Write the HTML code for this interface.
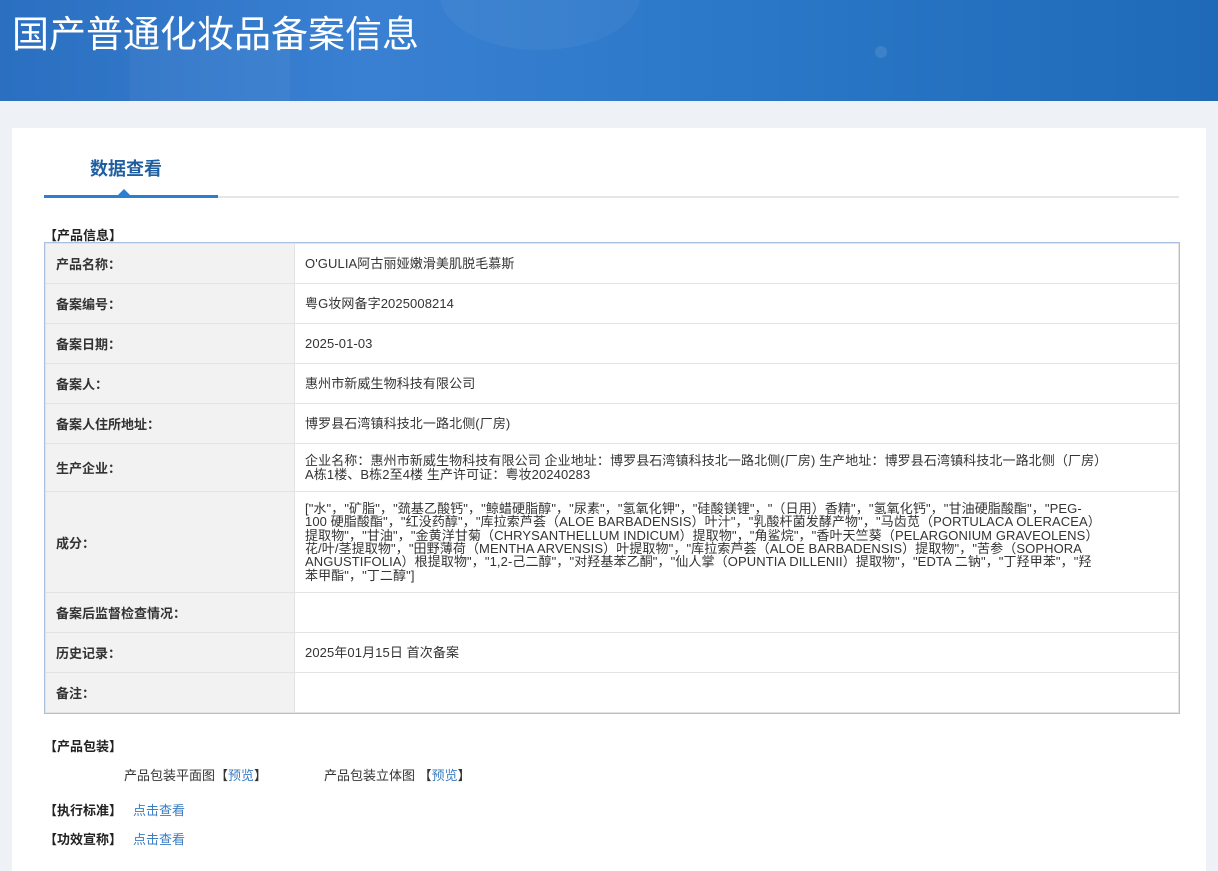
<!DOCTYPE html>
<html><head><meta charset="utf-8"><style>
*{margin:0;padding:0;box-sizing:border-box}
body{width:1218px;height:871px;overflow:hidden;background:#eef2f6;font-family:"Liberation Sans","Noto Sans CJK SC",sans-serif;font-size:13px;color:#333;position:relative}
.hd{position:absolute;left:0;top:0;width:1218px;height:101px;background:linear-gradient(90deg,#2a6fc0 0%,#3a80d2 30%,#2b78c8 60%,#1f6ab8 100%);overflow:hidden}
.hd h1{position:absolute;left:12px;top:4px;font-size:37px;font-weight:normal;color:#fff;font-family:"Noto Sans CJK SC",sans-serif}
.card{position:absolute;left:12px;top:128px;width:1194px;height:743px;background:#fff}
.abs{position:absolute;white-space:nowrap}
table{position:absolute;left:45px;top:243px;width:1134px;border-collapse:collapse;outline:1px solid #a9c1dd}
td{border:1px solid #e3e3e3;padding:0 10px;vertical-align:middle;font-size:13px}
td.l{width:249px;background:#f2f2f2;font-weight:bold;color:#333}
td.v{color:#333;line-height:13.3px;letter-spacing:0.1px}
a{color:#3a7cc0;text-decoration:none}
b{font-weight:bold;color:#222}
</style></head><body>
<div class="hd">
<div style="position:absolute;left:130px;top:40px;width:160px;height:70px;background:rgba(255,255,255,.04)"></div>
<div style="position:absolute;left:440px;top:-60px;width:200px;height:110px;border-radius:50%;background:rgba(255,255,255,.04)"></div>
<div style="position:absolute;left:875px;top:46px;width:12px;height:12px;border-radius:50%;background:rgba(255,255,255,.1)"></div>
<h1>国产普通化妆品备案信息</h1>
</div>
<div class="card"></div>
<div class="abs" style="left:90px;top:155px;font-size:18px;font-weight:bold;color:#1f5fa0">数据查看</div>
<div class="abs" style="left:44px;top:196px;width:1135px;height:2px;background:#e6e6e6"></div>
<div class="abs" style="left:44px;top:195px;width:174px;height:3px;background:#2a7fcf"></div>
<div class="abs" style="left:117px;top:189px;width:0;height:0;border-left:7px solid transparent;border-right:7px solid transparent;border-bottom:7px solid #2a7fcf"></div>
<div class="abs" style="left:44px;top:225px"><b>【产品信息】</b></div>
<table>
<tr style="height:40px"><td class="l">产品名称：</td><td class="v">O'GULIA阿古丽娅嫩滑美肌脱毛慕斯</td></tr>
<tr style="height:40px"><td class="l">备案编号：</td><td class="v">粤G妆网备字2025008214</td></tr>
<tr style="height:40px"><td class="l">备案日期：</td><td class="v">2025-01-03</td></tr>
<tr style="height:40px"><td class="l">备案人：</td><td class="v">惠州市新威生物科技有限公司</td></tr>
<tr style="height:40px"><td class="l">备案人住所地址：</td><td class="v">博罗县石湾镇科技北一路北侧(厂房)</td></tr>
<tr style="height:48px"><td class="l">生产企业：</td><td class="v">企业名称：惠州市新威生物科技有限公司 企业地址：博罗县石湾镇科技北一路北侧(厂房) 生产地址：博罗县石湾镇科技北一路北侧（厂房）<br>A栋1楼、B栋2至4楼 生产许可证：粤妆20240283</td></tr>
<tr style="height:101px"><td class="l">成分：</td><td class="v" style="padding-right:60px">["水"，"矿脂"，"巯基乙酸钙"，"鲸蜡硬脂醇"，"尿素"，"氢氧化钾"，"硅酸镁锂"，"（日用）香精"，"氢氧化钙"，"甘油硬脂酸酯"，"PEG-<br>100 硬脂酸酯"，"红没药醇"，"库拉索芦荟（ALOE BARBADENSIS）叶汁"，"乳酸杆菌发酵产物"，"马齿苋（PORTULACA OLERACEA）<br>提取物"，"甘油"，"金黄洋甘菊（CHRYSANTHELLUM INDICUM）提取物"，"角鲨烷"，"香叶天竺葵（PELARGONIUM GRAVEOLENS）<br>花/叶/茎提取物"，"田野薄荷（MENTHA ARVENSIS）叶提取物"，"库拉索芦荟（ALOE BARBADENSIS）提取物"，"苦参（SOPHORA<br>ANGUSTIFOLIA）根提取物"，"1,2-己二醇"，"对羟基苯乙酮"，"仙人掌（OPUNTIA DILLENII）提取物"，"EDTA 二钠"，"丁羟甲苯"，"羟<br>苯甲酯"，"丁二醇"]</td></tr>
<tr style="height:40px"><td class="l">备案后监督检查情况：</td><td class="v"></td></tr>
<tr style="height:40px"><td class="l">历史记录：</td><td class="v">2025年01月15日 首次备案</td></tr>
<tr style="height:40px"><td class="l">备注：</td><td class="v"></td></tr>
</table>
<div class="abs" style="left:44px;top:736px"><b>【产品包装】</b></div>
<div class="abs" style="left:124px;top:765px">产品包装平面图【<a>预览</a>】</div>
<div class="abs" style="left:324px;top:765px">产品包装立体图 【<a>预览</a>】</div>
<div class="abs" style="left:44px;top:800px"><b>【执行标准】</b></div><div class="abs" style="left:133px;top:800px"><a>点击查看</a></div>
<div class="abs" style="left:44px;top:829px"><b>【功效宣称】</b></div><div class="abs" style="left:133px;top:829px"><a>点击查看</a></div>
</body></html>
